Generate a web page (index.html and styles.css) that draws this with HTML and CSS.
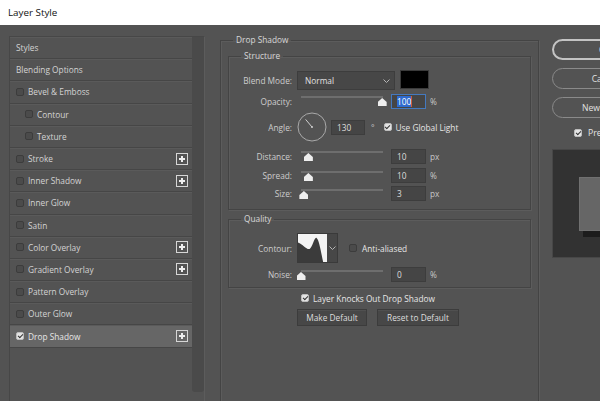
FILE: index.html
```html
<!DOCTYPE html>
<html lang="en">

<head>
    <meta charset="UTF-8">
    <title>Layer Style</title>
    <link rel="stylesheet" href="styles.css">
</head>

<body>
    <div class="titlebar">Layer Style</div>

    <div class="dialog">
        <!-- effects list -->
        <div class="styles-panel">
            <ul class="style-list">
                <li>Styles</li>
                <li>Blending Options</li>
                <li><span class="check"></span>Bevel &amp; Emboss</li>
                <li class="sub"><span class="check"></span>Contour</li>
                <li class="sub"><span class="check"></span>Texture</li>
                <li><span class="check"></span>Stroke<span class="plus"></span></li>
                <li><span class="check"></span>Inner Shadow<span class="plus"></span></li>
                <li><span class="check"></span>Inner Glow</li>
                <li><span class="check"></span>Satin</li>
                <li><span class="check"></span>Color Overlay<span class="plus"></span></li>
                <li><span class="check"></span>Gradient Overlay<span class="plus"></span></li>
                <li><span class="check"></span>Pattern Overlay</li>
                <li><span class="check"></span>Outer Glow</li>
                <li class="active"><span class="check on"></span>Drop Shadow<span class="plus"></span></li>
            </ul>
            <div class="scrollbar"></div>
        </div>

        <!-- settings -->
        <fieldset class="group outer">
            <legend>Drop Shadow</legend>

            <fieldset class="group structure">
                <legend>Structure</legend>

                <div class="row row-blend">
                    <label class="label">Blend Mode:</label>
                    <div class="select">
                        <span>Normal</span>
                        <svg class="chevron" width="7" height="4" viewBox="0 0 7 4"><polyline points="0.5,0.5 3.5,3.5 6.5,0.5" fill="none" stroke="#b5b5b5" stroke-width="1" /></svg>
                    </div>
                    <div class="swatch"></div>
                </div>

                <div class="row row-slider">
                    <label class="label">Opacity:</label>
                    <div class="slider"><span class="thumb" style="left: 99%"></span></div>
                    <div class="field selected"><span class="sel">100</span><span class="caret"></span></div>
                    <span class="unit">%</span>
                </div>

                <div class="row row-angle">
                    <label class="label">Angle:</label>
                    <svg class="dial" width="30" height="30" viewBox="0 0 30 30">
                        <circle cx="15" cy="15" r="14" fill="none" stroke="#a9a9a9" stroke-width="1" />
                        <line x1="15" y1="15" x2="8.6" y2="7.4" stroke="#cfcfcf" stroke-width="1" />
                        <circle cx="15" cy="15" r="1" fill="#cfcfcf" />
                    </svg>
                    <div class="field angle">130</div>
                    <span class="unit deg">&deg;</span>
                    <span class="check on global"></span>
                    <span class="bright">Use Global Light</span>
                </div>

                <div class="row row-slider">
                    <label class="label">Distance:</label>
                    <div class="slider"><span class="thumb" style="left: 9%"></span></div>
                    <div class="field">10</div>
                    <span class="unit">px</span>
                </div>

                <div class="row row-slider">
                    <label class="label">Spread:</label>
                    <div class="slider"><span class="thumb" style="left: 9%"></span></div>
                    <div class="field">10</div>
                    <span class="unit">%</span>
                </div>

                <div class="row row-slider">
                    <label class="label">Size:</label>
                    <div class="slider"><span class="thumb" style="left: 3.5%"></span></div>
                    <div class="field">3</div>
                    <span class="unit">px</span>
                </div>
            </fieldset>

            <fieldset class="group quality">
                <legend>Quality</legend>

                <div class="row row-contour">
                    <label class="label">Contour:</label>
                    <div class="contour">
                        <svg class="curve" width="29" height="28" viewBox="0 0 30 30" preserveAspectRatio="none">
                            <rect width="30" height="30" fill="#3b3b3b" />
                            <path d="M0 0H30V30H26C24 21 22 6 19 4C17 3 15 14 12 16C9 17 5 11 0 9Z" fill="#f4f4f4" />
                        </svg>
                        <div class="contour-drop">
                            <svg width="7" height="4" viewBox="0 0 7 4"><polyline points="0.5,0.5 3.5,3.5 6.5,0.5" fill="none" stroke="#b5b5b5" stroke-width="1" /></svg>
                        </div>
                    </div>
                    <span class="check aa"></span>
                    <span class="bright">Anti-aliased</span>
                </div>

                <div class="row row-slider row-noise">
                    <label class="label">Noise:</label>
                    <div class="slider"><span class="thumb" style="left: 0%"></span></div>
                    <div class="field">0</div>
                    <span class="unit">%</span>
                </div>
            </fieldset>

            <div class="knockout">
                <span class="check on"></span>
                <span class="bright">Layer Knocks Out Drop Shadow</span>
            </div>

            <div class="defaults">
                <button class="btn make">Make Default</button>
                <button class="btn reset">Reset to Default</button>
            </div>
        </fieldset>

        <!-- dialog actions -->
        <div class="actions">
            <button class="pill ok">OK</button>
            <button class="pill">Cancel</button>
            <button class="pill">New Style...</button>
            <div class="preview-check">
                <span class="check on"></span>
                <span class="bright">Preview</span>
            </div>
            <div class="preview">
                <div class="preview-square"></div>
            </div>
        </div>
    </div>
</body>

</html>
```

FILE: styles.css
```css
* {
    box-sizing: border-box;
}

body {
    margin: 0;
    width: 600px;
    height: 401px;
    overflow: hidden;
    background-color: #535353;
    font-family: "Open Sans", "Segoe UI", sans-serif;
    font-size: 8.3px;
    color: #d4d4d4;
}

.titlebar {
    height: 25px;
    background: #ffffff;
    color: #111111;
    font-size: 9.8px;
    line-height: 25px;
    padding-left: 8px;
}

.dialog {
    display: flex;
    align-items: flex-start;
    height: 376px;
    padding-left: 9px;
    overflow: hidden;
}

.dialog > * {
    flex: none;
}

/* left list */

.styles-panel {
    margin-top: 11px;
    width: 196px;
    height: 366px;
    display: flex;
    border: 1px solid #474747;
    border-right-color: #5c5c5c;
}

.style-list {
    flex: 1;
    list-style: none;
    margin: 0;
    padding: 0;
}

.style-list li {
    height: 22.2px;
    display: flex;
    align-items: center;
    padding-left: 6px;
    border-bottom: 1px solid #464646;
    box-shadow: inset 0 1px 0 #5a5a5a;
}

.style-list li.sub {
    padding-left: 15px;
}

.style-list li.active {
    background-color: #666666;
    color: #e6e6e6;
}

.style-list .check {
    margin-right: 4px;
}

.scrollbar {
    flex: none;
    width: 12px;
    height: 355px;
    background: #4a4a4a;
    border-radius: 0 0 3px 3px;
}

.plus {
    position: relative;
    flex: none;
    width: 12px;
    height: 12px;
    margin-left: auto;
    margin-right: 4px;
    border: 1px solid #d6d6d6;
}

.plus::before,
.plus::after {
    content: "";
    position: absolute;
    background: #eeeeee;
}

.plus::before {
    left: 2px;
    top: 4px;
    width: 6px;
    height: 2px;
}

.plus::after {
    left: 4px;
    top: 2px;
    width: 2px;
    height: 6px;
}

/* checkboxes */

.check {
    position: relative;
    display: inline-block;
    flex: none;
    width: 8px;
    height: 8px;
    background: #4b4b4b;
    border: 1px solid #3c3c3c;
    border-radius: 2px;
}

.check.on {
    background: #e4e4e4;
    border-color: #bdbdbd;
}

.check.on::after {
    content: "";
    position: absolute;
    left: 1.6px;
    top: -0.5px;
    width: 2px;
    height: 4px;
    border: solid #333333;
    border-width: 0 1.5px 1.5px 0;
    transform: rotate(45deg);
}

/* fieldsets */

.group {
    margin: 0;
    min-width: 0;
    border: 1px solid #444444;
    box-shadow: 1px 1px 0 #5c5c5c, inset 1px 1px 0 #5c5c5c;
}

.group legend {
    line-height: 12px;
    padding: 0 3px;
    color: #d8d8d8;
}

.outer {
    margin-left: 15px;
    margin-top: 9px;
    width: 319px;
    height: 370px;
    padding: 0 7px;
}

.outer > legend {
    margin-left: 5px;
}

.structure {
    margin-top: 4px;
    padding: 8px 0 7px 0;
}

.structure > legend,
.quality > legend {
    margin-left: 12px;
}

.quality {
    margin-top: 3px;
    padding: 8px 0 4px 0;
}

/* rows */

.row {
    display: flex;
    align-items: center;
    height: 18px;
}

.row > * {
    flex: none;
}

.label {
    width: 63px;
    text-align: right;
    color: #cdcdcd;
}

.row-blend {
    height: 21px;
}

.row-slider {
    height: 20px;
}

.row-slider + .row-slider,
.row-slider.row-noise {
    height: 18px;
}

.row-angle {
    height: 32px;
    margin-bottom: 3px;
}

.select {
    display: flex;
    align-items: center;
    justify-content: space-between;
    width: 98px;
    height: 19px;
    margin-left: 5px;
    padding: 0 4px 0 7px;
    background: #474747;
    border: 1px solid #3d3d3d;
    color: #e2e2e2;
}

.swatch {
    width: 29px;
    height: 19px;
    margin-left: 5px;
    margin-top: -2px;
    background: #000000;
    border: 1px solid #3a3a3a;
}

.slider {
    position: relative;
    align-self: stretch;
    width: 82px;
    margin-left: 9px;
}

.slider::before {
    content: "";
    position: absolute;
    left: 0;
    right: 0;
    top: 5px;
    height: 2px;
    background: #6e6e6e;
}

.thumb {
    position: absolute;
    top: 7px;
    width: 9px;
    height: 8px;
    margin-left: -4.5px;
    background: #eeeeee;
    clip-path: polygon(50% 0, 100% 50%, 100% 100%, 0 100%, 0 50%);
}

.field {
    width: 35px;
    height: 15px;
    margin-left: 8px;
    padding-left: 5px;
    line-height: 13px;
    background: #454545;
    border: 1px solid #3d3d3d;
    color: #dddddd;
}

.field.selected {
    border-color: #4479bf;
    display: flex;
    align-items: center;
}

.field .sel {
    background: #2f6bd0;
    color: #ffffff;
    line-height: 11px;
}

.field .caret {
    width: 1px;
    height: 11px;
    background: #d05a3a;
}

.unit {
    margin-left: 4px;
    color: #c8c8c8;
}

.dial {
    margin-left: 5px;
}

.field.angle {
    width: 34px;
    margin-left: 4px;
}

.unit.deg {
    margin-left: 6px;
}

.global {
    margin-left: 9px;
    margin-right: 4px;
}

.bright {
    color: #e6e6e6;
}

.row-contour {
    height: 30px;
}

.contour {
    display: flex;
    height: 30px;
    margin-left: 5px;
    border: 1px solid #3a3a3a;
}

.curve {
    display: block;
}

.contour-drop {
    width: 10px;
    display: flex;
    align-items: center;
    justify-content: center;
    background: #474747;
}

.aa {
    margin-left: 11px;
    margin-right: 5px;
}

.row-noise {
    margin-top: 2px;
}

.knockout {
    display: flex;
    align-items: center;
    height: 14px;
    margin-top: 3px;
    padding-left: 73px;
}

.knockout .check {
    margin-right: 4px;
}

.defaults {
    display: flex;
    margin-top: 4px;
    padding-left: 69px;
    gap: 10px;
}

.btn {
    height: 17px;
    padding: 0;
    font-family: inherit;
    font-size: 8.3px;
    color: #dedede;
    background: #474747;
    border: 1px solid #3c3c3c;
    box-shadow: inset 0 1px 0 #505050;
}

.btn.make {
    width: 70px;
}

.btn.reset {
    width: 82px;
}

/* right column */

.actions {
    width: 110px;
    margin-left: 13px;
    margin-top: 14px;
    display: flex;
    flex-direction: column;
    gap: 8px;
}

.pill {
    height: 21px;
    width: 106px;
    padding: 0;
    font-family: inherit;
    font-size: 8.6px;
    color: #e2e2e2;
    background: #535353;
    border: 1px solid #8a8a8a;
    border-radius: 11px;
}

.pill.ok {
    border: 2px solid #c4c4c4;
}

.preview-check {
    display: flex;
    align-items: center;
    height: 12px;
    margin-top: 1px;
    padding-left: 22px;
    font-size: 8.6px;
}

.preview-check .check {
    margin-right: 6px;
}

.preview {
    height: 109px;
    margin-top: 2px;
    padding: 27px 0 0 26px;
    background: #323232;
    border: 1px solid #474747;
    overflow: hidden;
}

.preview-square {
    width: 80px;
    height: 54px;
    background: #666666;
    border: 1px solid #707070;
    box-shadow: 4px 6px 0 #1c1c1c;
}
```
